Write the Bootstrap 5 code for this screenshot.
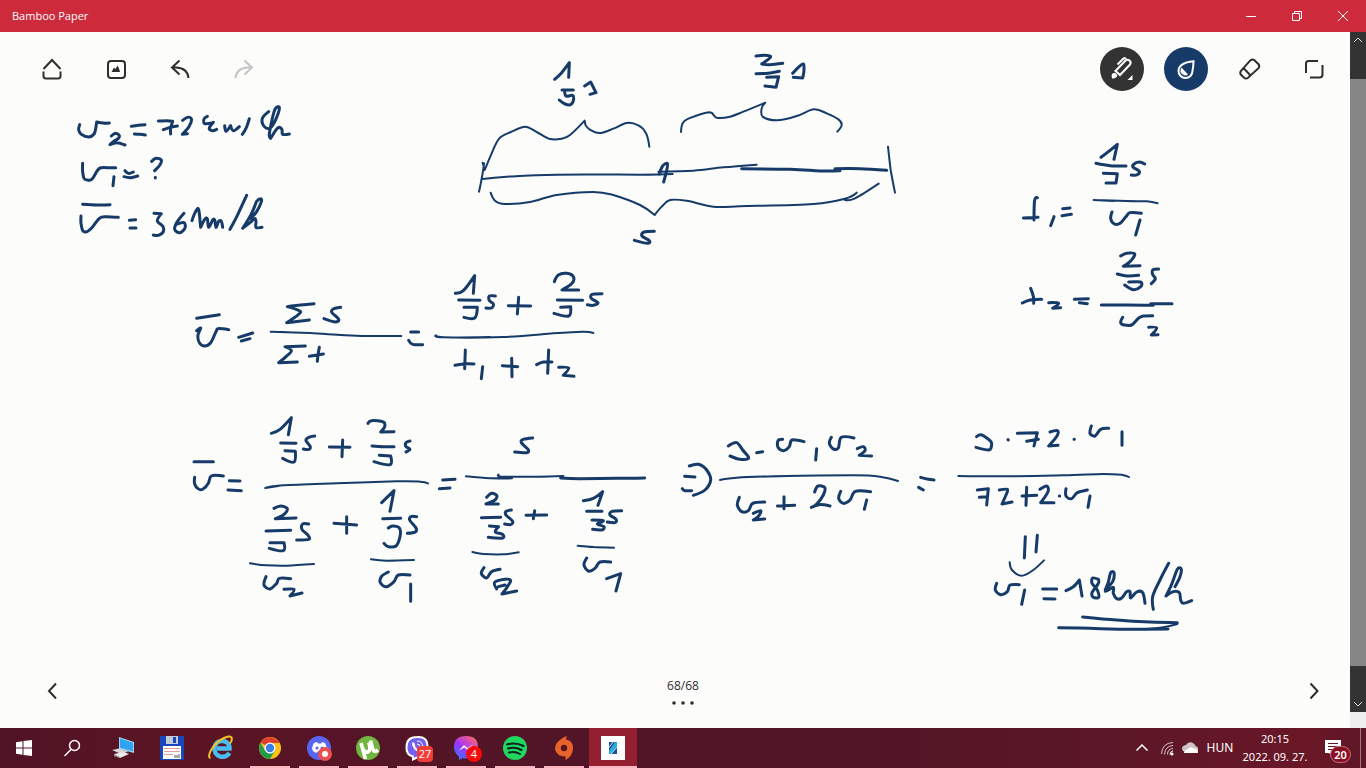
<!DOCTYPE html>
<html lang="en">
<head>
<meta charset="utf-8">
<meta name="viewport" content="width=device-width, initial-scale=1">
<title>Bamboo Paper</title>
<link href="https://cdn.jsdelivr.net/npm/bootstrap@5.3.0/dist/css/bootstrap.min.css" rel="stylesheet">
<style>
  body { font-family: "Open Sans", "Noto Sans", sans-serif; font-size: 12px; line-height: 18px; background: #fcfcfb; }
  button { background: none; border: 0; padding: 0; color: inherit; }
  svg { display: block; }
  .title-bar { height: 32px; background: #cd2a3c; font-size: 11px; }
  .win-btn { width: 46px; height: 32px; }
  .stage { min-height: 0; }
  .paper { background: #fcfcfb; color: #2e2e2e; }
  .ink { position: absolute; top: 0; left: 0; width: 100%; pointer-events: none; fill: none; stroke: #173b69; stroke-linecap: round; stroke-linejoin: round; }
  .tools { padding: 15px 14px 0 30px; gap: 20px; }
  .tool { width: 44px; height: 44px; border-radius: 50%; }
  .tool svg { fill: none; stroke: currentColor; stroke-width: 2; }
  .tool-pen { background: #333; color: #fff; }
  .tool-ink { background: #173b69; color: #fff; }
  .tool-off { color: #c4c4c4; }
  .pager { padding: 0 14px 15px 30px; }
  .pager-info { padding-top: 4px; }
  .rail { width: 16px; background: #333; color: #ddd; }
  .rail-btn { height: 16px; }
  .rail-thumb { background: #868686; margin-top: 31px; margin-bottom: 30px; }
  .rail-corner { height: 16px; background: #f0f0f0; }
  .taskbar { height: 40px; background: linear-gradient(90deg, #501425 0, #5c1424 14%, #551526 24%, #511527 45%, #501526 60%, #5c1727 82%, #6a1727 96%, #5e1626 100%); }
  .task { width: 48px; height: 40px; }
  .apps { margin-left: 3px; gap: 1px; }
  .running::after { content: ""; position: absolute; left: 4px; right: 4px; bottom: 0; height: 2px; background: #fbb6c1; }
  .current { background: #941f30; }
  .current::after { left: 0; right: 0; }
  .count { position: absolute; color: #fff; text-align: center; background: #f23c36; }
  .count-viber { left: 24px; top: 18px; width: 16px; height: 16px; line-height: 16px; font-size: 11px; border-radius: 4px; }
  .count-msg { left: 24px; top: 18px; width: 16px; height: 16px; line-height: 16px; font-size: 11px; border-radius: 50%; background: #f80a0a; }
  .count-note { left: 18px; top: 18px; width: 21px; height: 17px; line-height: 15px; font-size: 11px; font-weight: 600; border-radius: 9px; background: #8b0f22; border: 1px solid #c4707c; }
  .w-chev { width: 28px; } .w-net { width: 24px; } .w-cloud { width: 22px; } .w-lang { width: 36px; } .w-clock { width: 74px; font-size: 11px; }
  .show-desk { width: 6px; border-left: 1px solid #a0757d; }
  .tray-text { font-family: "Noto Sans", sans-serif; }
</style>
</head>
<body class="d-flex flex-column vh-100 overflow-hidden">

<header class="title-bar d-flex align-items-center text-white flex-shrink-0">
  <span class="ps-2 ms-1 me-auto">Bamboo Paper</span>
  <button class="win-btn" type="button" aria-label="Minimize"><svg width="46" height="32" stroke="#fff"><path d="M18 16.500h10"/></svg></button>
  <button class="win-btn" type="button" aria-label="Restore"><svg width="46" height="32" fill="none" stroke="#fff"><path d="M18.500 13.500h7v7h-7zM20.500 13.500v-2h7v7h-2"/></svg></button>
  <button class="win-btn" type="button" aria-label="Close"><svg width="46" height="32" stroke="#fff"><path d="M18 11l10 10M28 11l-10 10"/></svg></button>
</header>

<main class="stage d-flex flex-grow-1">
  <section class="paper position-relative flex-grow-1 d-flex flex-column justify-content-between">
    <svg class="ink" id="ink" viewBox="0 0 1350 696" role="img" aria-label="Handwritten notes"></svg>

    <nav class="tools d-flex position-relative">
      <button class="tool" type="button" aria-label="Home"><svg width="44" height="44"><path d="M13.500 22 22 13l8.500 9M13.500 24.500v4.500q0 2.500 2.500 2.500h12q2.500 0 2.500-2.500v-4.500"/></svg></button>
      <button class="tool" type="button" aria-label="Image"><svg width="44" height="44"><rect x="14" y="14" width="17" height="17" rx="3"/><path d="M17.500 25 20 20.500l1.500 1.500 2-3.500 1.500 3 1 3.500z" fill="currentColor" stroke="none"/></svg></button>
      <button class="tool" type="button" aria-label="Undo"><svg width="44" height="44"><path d="M21.500 13.500 14 20.500l7.500 7M14 20.500h4Q29.500 21 30.500 31"/></svg></button>
      <button class="tool tool-off me-auto" type="button" aria-label="Redo"><svg width="44" height="44"><path d="M22.500 13.500 30 20.500l-7.500 7M30 20.500h-4Q14.500 21 13.500 31"/></svg></button>
      <button class="tool tool-pen" type="button" aria-label="Pen"><svg width="44" height="44"><path d="M15.500 24 25.500 13.500q2-1.500 4 0 2 2 .5 4L20 28zM17.500 17.500l6-6q1.500-1 2.500.5"/><path d="M12 31.500q-1.500-6 3-5.500 3.500 2 1.500 4-2 2-4.500 1.500zM32.500 28v5h-5z" fill="currentColor" stroke="none"/></svg></button>
      <button class="tool tool-ink" type="button" aria-label="Colour"><svg width="44" height="44"><path d="M29.500 14.200C22 15 14.500 17 14.500 24a7 7 0 0 0 14 0c.5-3 1-6.500 1-9.800z"/><path d="M17.500 20.500 24 27.500q-3 2-6-.5t-.5-6.500z" fill="currentColor" stroke="none"/></svg></button>
      <button class="tool" type="button" aria-label="Eraser"><svg width="44" height="44"><path d="M22.500 13.200q2-1.500 4 0l4 4q1.500 2 0 4L20 30.800q-2 1.500-4 0l-3-3q-1.500-2 0-4zM15.500 21l7 7.500"/></svg></button>
      <button class="tool" type="button" aria-label="Full screen"><svg width="44" height="44"><path d="M14 26v-9.500q0-2.500 2.500-2.500H26M30.500 18v9.500q0 3-3 3H18"/></svg></button>
    </nav>

    <nav class="pager d-flex position-relative justify-content-between align-items-center">
      <button class="tool" type="button" aria-label="Previous page"><svg width="44" height="44"><path d="M26 14.500 19 22l7 7.500"/></svg></button>
      <div class="pager-info d-flex flex-column align-items-center">
        <span>68/68</span>
        <button type="button" aria-label="Pages"><svg width="24" height="14" fill="#2e2e2e"><circle cx="3" cy="8" r="1.800"/><circle cx="12" cy="8" r="1.800"/><circle cx="21" cy="8" r="1.800"/></svg></button>
      </div>
      <button class="tool" type="button" aria-label="Next page"><svg width="44" height="44"><path d="M18.500 14.500l7 7.500-7 7.500"/></svg></button>
    </nav>
  </section>

  <aside class="rail d-flex flex-column flex-shrink-0">
    <button class="rail-btn" type="button" aria-label="Scroll up"><svg width="16" height="16" fill="none" stroke="currentColor"><path d="M4 10l4-4 4 4"/></svg></button>
    <div class="rail-thumb flex-grow-1"></div>
    <button class="rail-btn" type="button" aria-label="Scroll down"><svg width="16" height="16" fill="none" stroke="currentColor"><path d="M4 6l4 4 4-4"/></svg></button>
    <div class="rail-corner"></div>
  </aside>
</main>

<footer class="taskbar d-flex text-white flex-shrink-0">
  <button class="task" type="button" aria-label="Start"><svg width="48" height="40" fill="#fff"><path d="M16 14.200 22.500 13.200V19.500H16zM23.500 13 32 12v7.500h-8.500zM16 20.500h6.500v6.300L16 25.800zM23.500 20.500H32V28l-8.500-1z"/></svg></button>
  <button class="task" type="button" aria-label="Search"><svg width="48" height="40" fill="none" stroke="#fff" stroke-width="1.500"><circle cx="26.500" cy="17.500" r="5"/><path d="M23 21.500 16.500 28"/></svg></button>
  <div class="apps d-flex">
    <button class="task" type="button" aria-label="This PC"><svg width="48" height="40"><path d="M20 9l15 5v11l-15-4z" fill="#9fd4ee"/><path d="M21 10.500l13 4.200v8.600l-13-3.500z" fill="#2ea4f2"/><path d="M13 22l7-1.500 9 3-7 2.500z" fill="#d4d7da"/><path d="M15 26l10-2 5 2-9 4z" fill="#e9ebec"/><path d="M15 26l6 3v1l-6-2z" fill="#9da3a8"/></svg></button>
    <button class="task" type="button" aria-label="File manager"><svg width="48" height="40"><rect x="12" y="8" width="24" height="24" rx="1" fill="#1747bd"/><path d="M18 8h12v8H18z" fill="#c4cbd8"/><path d="M25 9h3v6h-3z" fill="#1747bd"/><path d="M15 18h18v13H15z" fill="#fff"/><path d="M16 20.500h16M16 23.500h16M16 26.500h9" stroke="#ea9a9a"/><path d="M27 27v3M29 27v3M31 26v4" stroke="#555"/></svg></button>
    <button class="task" type="button" aria-label="Internet Explorer"><svg width="48" height="40" fill="none"><path d="M32.500 25c-5 7-16 3.500-15-5 1-10 15.500-9 15 .5H20" stroke="#49bdf0" stroke-width="4.500"/><path d="M13.500 30c-5-1 4-18.500 18-21.500 4-.5 4.500 3 1.500 7" stroke="#f4c122" stroke-width="2"/></svg></button>
    <button class="task running position-relative" type="button" aria-label="Chrome"><svg width="48" height="40"><circle cx="24" cy="20" r="11" fill="#fbc116"/><path d="M24 20 14.500 14.500A11 11 0 0 1 33.500 15H24z" fill="#e33b2e"/><path d="M14.500 14.500A11 11 0 0 0 24 31l5-8.500-10 0z" fill="#249b4b"/><circle cx="24" cy="20" r="5.500" fill="#fff"/><circle cx="24" cy="20" r="4.200" fill="#3a7de8"/></svg></button>
    <button class="task running position-relative" type="button" aria-label="Discord"><svg width="48" height="40"><circle cx="24" cy="20" r="12" fill="#5865f2"/><path d="M19 15l3-1 1 1.500h3l1-1.500 3 1q3 6 1 8l-3 2-1.500-2h-3L21 25l-3-2q-2-3 1-8z" fill="#fff"/><circle cx="22" cy="20" r="1.500" fill="#5865f2"/><circle cx="27" cy="20" r="1.500" fill="#5865f2"/><circle cx="30" cy="26" r="7" fill="#ed4f50"/><circle cx="30" cy="26" r="3" fill="#fff"/></svg></button>
    <button class="task running position-relative" type="button" aria-label="Torrents"><svg width="48" height="40"><circle cx="24" cy="20" r="12" fill="#72b63f"/><path d="M17 15l4.500 16M17.800 18q2 7 6 6 3.500-1.500 1-9.500M26.500 12.500q2 9 3.500 10.500 1.500 1 4-1" fill="none" stroke="#fff" stroke-width="3.600"/></svg></button>
    <button class="task running position-relative" type="button" aria-label="Viber, 27 messages"><svg width="48" height="40"><path d="M24 9q10.500-1 10.500 10T24 29.500l-4 2v-3Q13 27 13.500 19 13.500 9 24 9z" fill="#7360f2" stroke="#fff" stroke-width="2"/><path d="M20 14q-2 1 0 5t7 6q3-1 1-3l-2 0q-4-2-4-5 0-2-2-3z" fill="#fff"/><path d="M24 13q6 0 6 7M24 16q3 0 3.500 3.500" fill="none" stroke="#fff"/></svg><span class="count count-viber">27</span></button>
    <button class="task running position-relative" type="button" aria-label="Messenger, 4 messages"><svg width="48" height="40"><defs><linearGradient id="msg" x1="0" y1="1" x2=".8" y2="0"><stop offset="0" stop-color="#1787ff"/><stop offset=".5" stop-color="#a033ff"/><stop offset="1" stop-color="#ff6470"/></linearGradient></defs><path d="M24 8q12 0 12 11T24 30.500q-2 0-3-.5l-4 2v-3.500Q12 25 12 19 12 8 24 8z" fill="url(#msg)"/><path d="M17 22.500 22 17l3.500 3 5.500-3.500-5 6-3.500-3z" fill="#fff"/></svg><span class="count count-msg">4</span></button>
    <button class="task running position-relative" type="button" aria-label="Spotify"><svg width="48" height="40"><circle cx="24" cy="20" r="12" fill="#1fd760"/><path d="M16 16.500q9-2.500 16.500 1.500M17 20.500q7-2 13.500 1.500M18 24.500q6-1.500 11 1.500" fill="none" stroke="#10201a" stroke-width="2" stroke-linecap="round"/></svg></button>
    <button class="task running position-relative" type="button" aria-label="Origin"><svg width="48" height="40"><path d="M20 12q3-3 7-4-1 2-1 3.500 7 1 7 8.500 0 8-8 12.500 1-2 .5-4-9-.5-10.500-7Q15 15 20 12z" fill="#e9622a"/><circle cx="24" cy="20" r="3.200" fill="#531526"/></svg></button>
    <button class="task running current position-relative" type="button" aria-label="Bamboo Paper"><svg width="48" height="40"><path d="M12 8h24v24H12z" fill="#fff"/><path d="M20 14h6.500q1.500 1 1.500 5v7q0 0-1 0h-7z" fill="#1d4f9c"/><path d="M20 23l6-9h2v4l-6 8h-2z" fill="#23b0d8"/><path d="M20 19.500 24 14M22 26l6-7" stroke="#fff" stroke-width=".8"/></svg></button>
  </div>

  <div class="tray-text d-flex ms-auto">
    <button class="w-chev" type="button" aria-label="Hidden icons"><svg width="28" height="40" fill="none" stroke="#fff" stroke-width="1.500"><path d="M8.500 22.500 14 17l5.500 5.500"/></svg></button>
    <button class="w-net" type="button" aria-label="Network"><svg width="24" height="40" fill="none" stroke="#d8c5c9"><path d="M5.500 26Q6 15 17 14.500M8.500 26.500q.5-8.500 8.500-9M11.500 26.500q0-5.500 5.500-6" /><path d="M14 26.500q0-3 3-3.500" stroke="#fff"/><circle cx="16" cy="26" r="1.500" fill="#fff" stroke="none"/></svg></button>
    <button class="w-cloud" type="button" aria-label="Cloud sync"><svg width="22" height="40"><path d="M6 24q-4-.5-4-3.500t4-3.500q2-3.500 6-2.500 3 1 3.500 3.500 3 .5 2.500 4 0 2-3 2z" fill="#cfc3c6"/><path d="M4 25q0-3 4-4 3-3 6-.5 4 0 4 4 0 .5-1 .5z" fill="#fff"/></svg></button>
    <button class="w-lang" type="button">HUN</button>
    <button class="w-clock text-nowrap" type="button">20:15<br>2022. 09. 27.</button>
    <button class="task position-relative" type="button" aria-label="Notifications"><svg width="48" height="40"><path d="M13 12h16v13h-9v3l-3-3h-4z" fill="#fff"/><path d="M16 15.500h10M16 18.500h10M16 21.500h6" stroke="#5c1626"/></svg><span class="count count-note">20</span></button>
    <button class="show-desk" type="button" aria-label="Show desktop"></button>
  </div>
</footer>

<script src="https://cdn.jsdelivr.net/npm/bootstrap@5.3.0/dist/js/bootstrap.bundle.min.js"></script>
<script>
  // Ink layers: page origin, then pen strokes in third-of-a-pixel units.
  // A repeated point makes a corner; strokes are separated by "|".
  const layers = [
    { x: 0, y: 0, pen: `
      239 374 236 390 246 404 266 411 282 402 288 380 290 366 290 366 310 369 328 369|334 408 345 400 357 405 355 415 340 425 330 434 330 434 350 428 375 435|394 379 415 376 435 374|403 402 420 403 436 405|475 363 500 362 518 364 518 364 512 385 512 402|490 389 510 382 532 378|548 361 562 352 574 356 568 378 547 403 547 403 562 401|
      622 349 612 357 614 371 640 367 640 367 628 384 636 392 650 388|674 377 678 394 692 377 692 377 700 392 718 380|748 356 738 385 727 403|806 335 788 353 788 372 798 384 812 383 830 352 838 322 826 326 816 360 808 402 812 415 812 415 834 383 846 389 848 403 868 402|
      248 490 248 515 252 535 262 540 275 538 290 515 300 504 320 503 347 503|342 530 339 557|375 512 385 520 400 516|372 530 390 533 413 528|455 484 468 475 484 480 480 494 464 512|466 532 466 534|
      248 613 290 615 330 614|243 648 243 670 248 692 258 696 275 684 298 655 320 650 355 652|388 661 407 659|390 684 408 684|462 640 484 641 484 641 472 663 488 678 490 695 475 706 460 705|552 640 532 665 524 688 540 698 555 684 552 668 532 672|576 662 584 640 594 625 598 640 602 682 602 682 614 658 622 656 626 682 638 660 644 660 648 682 656 664 664 664 668 682|740 586 715 640 690 688|752 655 770 635 784 605 782 596 770 604 755 640 728 685 728 685 750 668 764 656 768 664 768 682 786 682` },
    { x: 440, y: 40, pen: `
      344 118 365 98 388 68 388 68 386 112|366 150 400 150|374 150 378 168 398 166 400 182 392 194 375 192 358 180|434 138 452 126 452 126 468 158 468 158 450 163|
      948 48 972 46 992 50 972 68 966 72 990 74 1028 70|948 101 985 100 1018 94|980 112 1016 110 1016 110 1008 142 1008 142 975 138|1058 100 1075 82 1090 72 1092 90 1088 114 1088 114 1060 112|643 574 612 576 606 588 628 602 622 610 583 601|905 386 1050 388 1140 393 1200 392|1185 386 1260 386 1340 391|658 402 668 378 682 370 680 392 671 426`, fine: `
      128 368 134 390 134 390 155 340 178 295 215 275 255 260 290 276 330 297 365 296 390 285 434 242 434 242 438 258 455 272 482 279 520 266 560 249 595 256 618 280 628 320|723 276 728 250 745 236 808 217 830 233 870 230 910 215 976 188 976 188 965 205 968 230 1010 241 1070 228 1122 208 1160 220 1195 238 1205 255 1192 275|655 395 760 392 850 382 950 374|132 370 126 410 117 455|1344 320 1352 390 1365 458|128 417 200 410 350 404 600 404 698 402|
      152 458 165 482 195 492 270 486 350 465 460 456 520 465 600 495 644 525 644 525 665 500 690 480 740 482 820 500 920 498 1120 492 1215 476 1250 458|1215 480 1245 475 1316 431` },
    { x: 980, y: 0, pen: `
      363 472 385 455 412 433 412 433 402 478|348 490 390 497 438 498|370 520 412 521 412 521 408 549 408 549 378 549|494 492 478 486 460 494 460 502 478 514 470 525 454 525|396 636 392 655 402 671 420 670 438 650 450 638 484 640|480 660 467 705|172 593 164 600 162 660|130 654 174 652|222 650 212 677|248 626 270 624|246 647 274 643|
      422 768 440 760 464 762 450 785 430 799 430 799 480 797|412 822 440 828 476 826|446 846 482 846 482 860 460 869 434 855|536 807 518 810 518 824 526 836 514 851|152 865 160 890 161 910|127 909 150 900 185 898|206 908 236 910 218 925 218 925 242 923|283 898 325 896|298 908 322 911|364 915 440 915 520 916|512 911 576 911|428 952 422 968 432 975 455 975 475 955 490 948 518 947|506 982 530 984 514 1005 514 1005 534 1004`, fine: `341 600 440 603 500 604 533 610|341 600 400 603` },
    { x: 170, y: 260, pen: `
      80 175 148 164|80 212 92 204 84 225 88 248 104 258 122 248 138 215 144 206 176 209|206 232 248 219|214 243 240 236|432 131 370 137 352 140 352 140 378 148 392 156 370 175 350 188 350 188 418 180|512 142 488 148 486 158 506 178 496 186 462 176|406 258 345 260 345 260 364 272 348 290 326 308 326 308 382 306|448 262 444 285 442 304|418 289 460 282|722 216 746 216|716 241 728 253 758 254|856 100 880 92 914 47 914 47 910 100|866 120 930 121|882 142 922 142 922 142 914 174 882 172|976 108 958 108 958 122 970 132 965 144 948 144|1046 112 1042 162|1015 137 1082 138|1153 65 1165 45 1190 40 1210 50 1206 70 1176 90 1176 90 1226 90|1162 120 1238 121|1172 142 1202 140 1202 140 1196 168 1152 160|1296 101 1266 103 1264 115 1284 128 1270 136 1252 134|
      886 270 884 326|855 316 880 312 912 312|938 320 934 356|1025 295 1026 350|997 317 1043 320|1136 270 1133 340|1100 314 1120 306 1146 306|1166 322 1196 324 1180 346 1180 346 1212 349`, fine: `302 215 420 219 560 227 694 228|302 215 420 219|798 226 820 232 1000 231 1150 220 1240 215 1270 219|798 226 820 232 960 231` },
    { x: 170, y: 400, pen: `
      304 100 330 88 364 53 364 53 355 104|332 129 378 130|345 152 376 154 376 154 372 186 338 175|434 108 416 112 408 122 420 138 418 148 400 147|518 120 516 170|478 141 540 142|594 70 605 62 640 66 644 80 632 96 632 96 672 95|606 138 640 140 672 140|628 166 662 168 662 168 660 194 612 185|720 123 708 128 708 140 720 148 708 156|72 185 130 185|74 232 74 252 84 266 98 268 115 250 124 228 160 228|178 242 210 243|174 270 214 272|
      312 325 332 318 352 326 340 345 316 356 316 356 378 354|288 393 362 391|300 428 342 428 342 428 340 452 298 445|416 372 398 372 396 388 414 406 416 418 380 420|530 350 530 400|492 370 560 375|635 308 672 272 672 272 660 334|638 356 692 355|655 384 668 378 688 384 690 410 678 438 655 440 642 430|740 350 722 350 720 362 738 384 736 396 712 400|288 530 282 555 300 567 320 550 328 535 362 536|342 568 372 568 360 588 360 588 396 579|655 516 634 530 632 550 650 560 672 545 685 525 720 525|722 552 722 604`, fine: `286 264 340 256 500 250 680 244 750 245 774 250|286 264 330 257|240 490 290 496 350 497 432 492|603 478 650 482 732 480` },
    { x: 430, y: 400, pen: `
      308 114 280 118 274 128 294 148 290 158 254 156|38 240 75 238|28 266 60 264|170 292 185 280 200 286 195 300 168 312 168 312 205 312|154 353 212 352|178 378 206 380 206 380 196 396 216 402 218 414 175 412|244 330 228 334 228 345 248 364 242 374 224 372|314 332 310 356|288 346 350 345|460 302 490 295 518 275 518 275 504 316|470 334 516 334|486 360 520 362 502 372 522 380 515 390 488 388|575 332 546 334 540 345 558 358 555 368 532 366|162 503 154 520 170 534 185 515 210 508|200 567 194 547 225 538 242 542 232 560 216 582 216 582 260 573|205 560 225 555|470 474 462 495 475 513 495 505 510 486 542 486|530 536 572 521 572 521 558 573|764 229 795 231|757 266 765 272 785 272|392 234 450 236 560 235 644 234`, fine: `108 229 180 235 246 235|180 235 246 235|206 224 215 230 320 230 400 228|127 456 160 462 220 463 266 457|443 437 490 441 552 443|443 437 490 441` },
    { x: 670, y: 400, pen: `
      58 198 85 193 110 210 122 240 105 270 70 286|175 138 200 128 218 150 236 174 210 178 180 168|260 158 278 155|338 118 324 122 324 142 340 152 358 140 366 120 402 125|440 146 437 180|484 112 478 130 490 147 505 144 514 112 552 114|562 146 580 140 585 152 568 166 568 166 605 168|208 292 202 315 215 335 235 332 248 310 284 306|250 340 272 332 266 348 250 360 250 360 284 357|342 290 342 326|322 318 374 316|434 276 444 258 464 262 460 285 440 312 424 322 424 322 448 314 480 318|512 274 506 295 520 310 540 300 556 274 602 275|590 300 583 328|752 232 775 238 792 240|746 262 760 270`, fine: `150 240 200 233 350 228 550 226 630 230 684 243|150 240 200 233 350 228` },
    { x: 930, y: 400, pen: `
      140 110 155 105 182 124 184 140 175 150 138 142|234 119 235 120|262 100 322 98 322 98 312 138|290 124 325 118|360 96 382 92 382 106 356 138 356 138 384 136|432 118 433 118|484 78 480 100 495 108 512 88 536 85|576 95 576 136|142 270 175 266 175 266 170 315|148 292 172 290|208 270 232 268 228 285 216 312 216 312 246 306|290 262 288 316|276 288 320 286|330 268 350 258 354 275 332 308 332 308 372 308|388 288 389 288|408 266 408 288 425 296 442 278 472 270|480 288 474 322|286 410 283 474|322 406 318 456|200 550 196 570 212 584 232 575 240 555 268 554|284 570 275 613|338 567 380 567|342 596 375 597|408 572 430 560 448 540 448 540 456 588|505 538 488 534 486 550 502 570 506 592 490 592 486 578 505 550 505 538|
      526 568 548 545 552 518 542 518 534 550 526 574 550 562 550 580 560 596 575 594 590 575 600 575 602 594 620 576 638 578 645 610|716 490 690 540 668 590 670 628|735 560 750 530 754 508 742 508 722 560 708 588 708 588 730 575 748 578 752 600 760 610 785 602|458 651 560 660 660 666 742 668|386 683 480 685 600 688 714 687`, fine: `239 487 246 510 275 527 310 510 342 481|742 672 700 682 640 688|85 228 200 229 400 226 520 222 575 224 597 231` }
  ];

  // Smooth a stroke through its points.
  function trace(text) {
    const n = text.trim().split(/\s+/).map(Number), p = [];
    for (let i = 0; i < n.length; i += 2) p.push([n[i], n[i + 1]]);
    const same = (a, b) => a[0] === b[0] && a[1] === b[1];
    const slope = (i, k) => {
      const a = p[i - 1] || p[i], b = p[i + 1] || p[i];
      return same(a, p[i]) || same(b, p[i]) ? 0 : (b[k] - a[k]) / 6;
    };
    let d = "M" + p[0];
    for (let i = 1; i < p.length; i++) {
      d += "C" + [p[i-1][0] + slope(i-1, 0), p[i-1][1] + slope(i-1, 1), p[i][0] - slope(i, 0), p[i][1] - slope(i, 1), ...p[i]].map(Math.round);
    }
    return d;
  }
  document.getElementById("ink").innerHTML = layers.map(l =>
    [["pen", 9], ["fine", 6]].filter(([k]) => l[k]).map(([k, w]) =>
      `<g transform="translate(${l.x} ${l.y - 32}) scale(${1 / 3})" stroke-width="${w}"><path d="${l[k].split("|").map(trace).join("")}"/></g>`
    ).join("")).join("");
</script>
</body>
</html>
